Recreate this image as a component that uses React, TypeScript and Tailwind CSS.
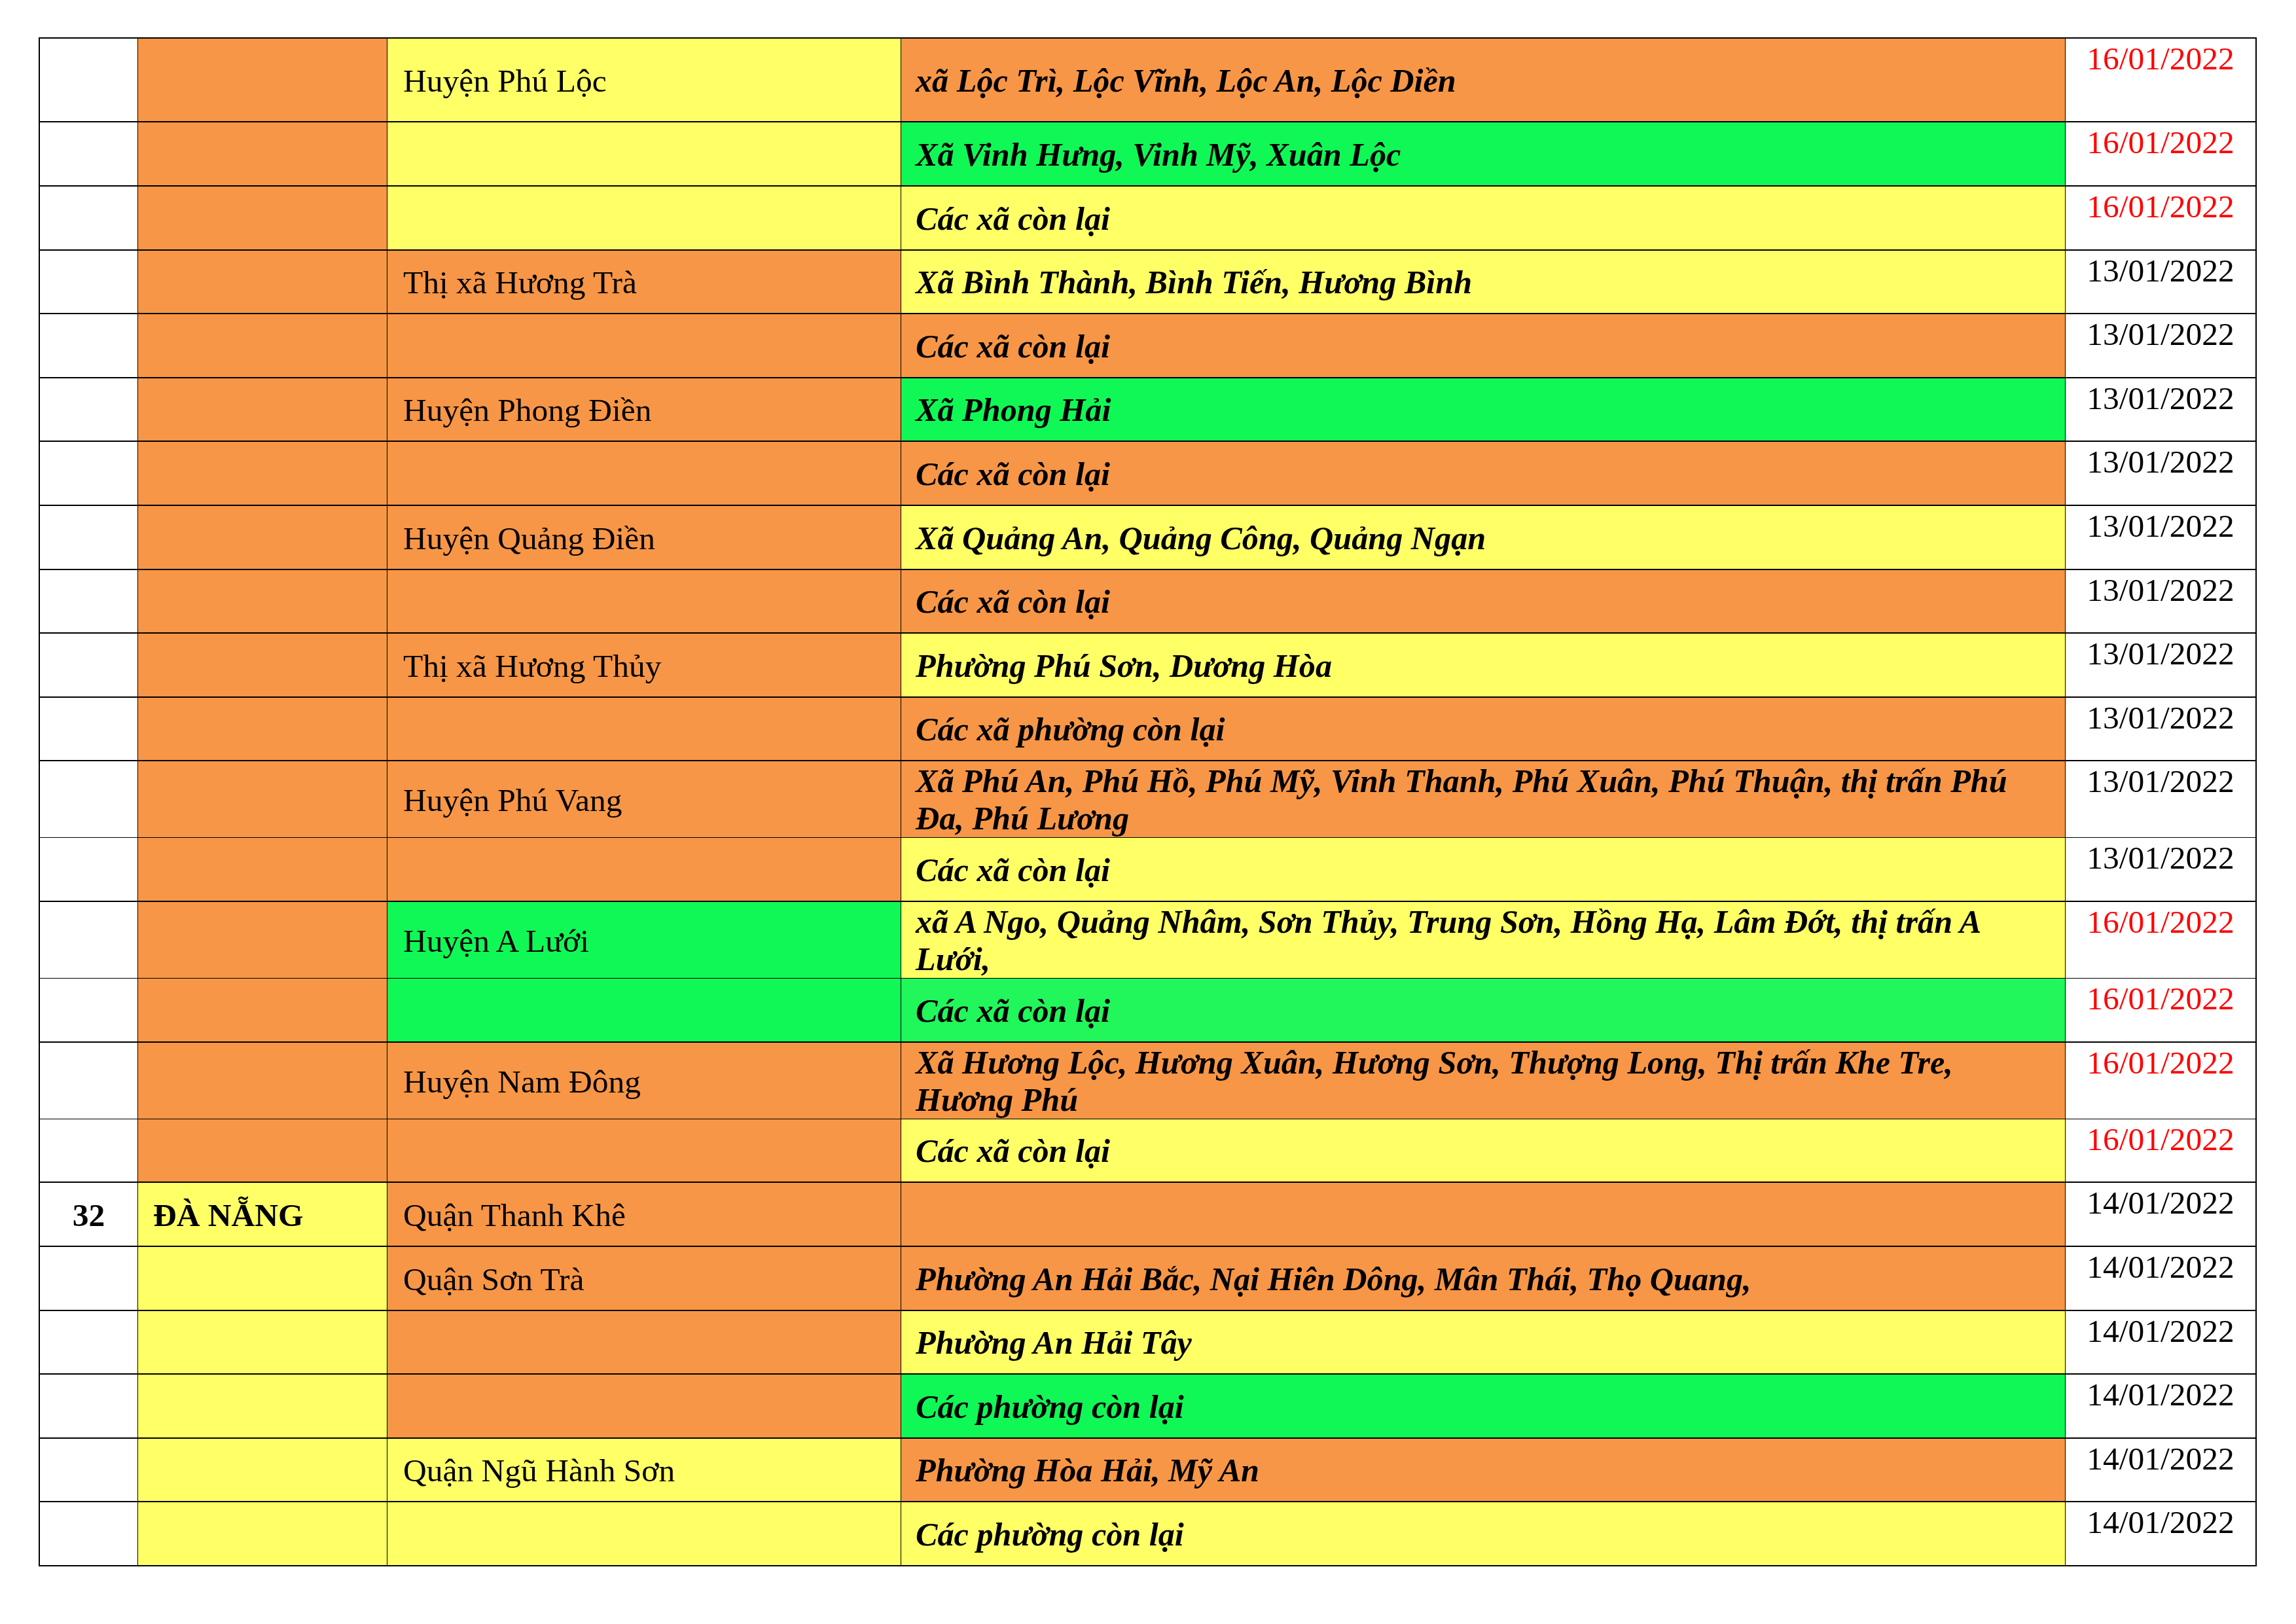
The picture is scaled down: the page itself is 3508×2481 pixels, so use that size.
import React from "react";

type Row = {
  h: string;
  no?: string;
  c2: string;
  prov?: string;
  c3: string;
  district?: string;
  c4: string;
  wards?: string[];
  date: string;
  red: boolean;
};

const BG: Record<string, string> = {
  o: "bg-[#f79646]",
  y: "bg-[#ffff66]",
  g: "bg-[#10f855]",
  g2: "bg-[#21f65a]",
  w: "bg-white",
};

const D16 = "16/01/2022";
const D13 = "13/01/2022";
const D14 = "14/01/2022";

const rows: Row[] = [
  { h: "h-[126px]", c2: "o", c3: "y", district: "Huyện Phú Lộc", c4: "o", wards: ["xã Lộc Trì, Lộc Vĩnh, Lộc An, Lộc Diền"], date: D16, red: true },
  { h: "h-[96px]", c2: "o", c3: "y", c4: "g", wards: ["Xã Vinh Hưng, Vinh Mỹ, Xuân Lộc"], date: D16, red: true },
  { h: "h-[96px]", c2: "o", c3: "y", c4: "y", wards: ["Các xã còn lại"], date: D16, red: true },
  { h: "h-[95px]", c2: "o", c3: "o", district: "Thị xã Hương Trà", c4: "y", wards: ["Xã Bình Thành, Bình Tiến, Hương Bình"], date: D13, red: false },
  { h: "h-[96px]", c2: "o", c3: "o", c4: "o", wards: ["Các xã còn lại"], date: D13, red: false },
  { h: "h-[95px]", c2: "o", c3: "o", district: "Huyện Phong Điền", c4: "g", wards: ["Xã Phong Hải"], date: D13, red: false },
  { h: "h-[96px]", c2: "o", c3: "o", c4: "o", wards: ["Các xã còn lại"], date: D13, red: false },
  { h: "h-[96px]", c2: "o", c3: "o", district: "Huyện Quảng Điền", c4: "y", wards: ["Xã Quảng An, Quảng Công, Quảng Ngạn"], date: D13, red: false },
  { h: "h-[95px]", c2: "o", c3: "o", c4: "o", wards: ["Các xã còn lại"], date: D13, red: false },
  { h: "h-[96px]", c2: "o", c3: "o", district: "Thị xã Hương Thủy", c4: "y", wards: ["Phường Phú Sơn, Dương Hòa"], date: D13, red: false },
  { h: "h-[95px]", c2: "o", c3: "o", c4: "o", wards: ["Các xã phường còn lại"], date: D13, red: false },
  { h: "h-[115px]", c2: "o", c3: "o", district: "Huyện Phú Vang", c4: "o", wards: ["Xã Phú An, Phú Hồ, Phú Mỹ, Vinh Thanh, Phú Xuân, Phú Thuận, thị trấn Phú", "Đa, Phú Lương"], date: D13, red: false },
  { h: "h-[96px]", c2: "o", c3: "o", c4: "y", wards: ["Các xã còn lại"], date: D13, red: false },
  { h: "h-[115px]", c2: "o", c3: "g", district: "Huyện A Lưới", c4: "y", wards: ["xã A Ngo, Quảng Nhâm, Sơn Thủy, Trung Sơn, Hồng Hạ, Lâm Đớt, thị trấn A", "Lưới,"], date: D16, red: true },
  { h: "h-[96px]", c2: "o", c3: "g", c4: "g2", wards: ["Các xã còn lại"], date: D16, red: true },
  { h: "h-[115px]", c2: "o", c3: "o", district: "Huyện Nam Đông", c4: "o", wards: ["Xã Hương Lộc, Hương Xuân, Hương Sơn, Thượng Long, Thị trấn Khe Tre,", "Hương Phú"], date: D16, red: true },
  { h: "h-[95px]", c2: "o", c3: "o", c4: "y", wards: ["Các xã còn lại"], date: D16, red: true },
  { h: "h-[96px]", no: "32", c2: "y", prov: "ĐÀ NẴNG", c3: "o", district: "Quận Thanh Khê", c4: "o", date: D14, red: false },
  { h: "h-[96px]", c2: "y", c3: "o", district: "Quận Sơn Trà", c4: "o", wards: ["Phường An Hải Bắc, Nại Hiên Dông, Mân Thái, Thọ Quang,"], date: D14, red: false },
  { h: "h-[95px]", c2: "y", c3: "o", c4: "y", wards: ["Phường An Hải Tây"], date: D14, red: false },
  { h: "h-[96px]", c2: "y", c3: "o", c4: "g", wards: ["Các phường còn lại"], date: D14, red: false },
  { h: "h-[95px]", c2: "y", c3: "y", district: "Quận Ngũ Hành Sơn", c4: "o", wards: ["Phường Hòa Hải, Mỹ An"], date: D14, red: false },
  { h: "h-[96px]", c2: "y", c3: "y", c4: "y", wards: ["Các phường còn lại"], date: D14, red: false },
];

export default function App() {
  return (
    <div className="w-[3508px] h-[2481px] bg-white pt-[57px] pl-[59px] font-['Liberation_Serif','Times_New_Roman',serif] text-[49.5px] leading-[57px] text-black">
      <div className="flex w-[3389px] flex-col gap-[2px] bg-black p-[2px]">
        {rows.map((r, i) => (
          <div key={i} className={`grid grid-cols-[149px_380px_784px_1778px_290px] gap-x-[1px] ${r.h}`}>
            <div className="flex items-center justify-center bg-white pt-[2px] font-bold">{r.no ?? ""}</div>
            <div className={`flex items-center pl-[23px] pt-[2px] font-bold ${BG[r.c2]}`}>{r.prov ?? ""}</div>
            <div className={`flex items-center pl-[24px] pt-[2px] ${BG[r.c3]}`}>{r.district ?? ""}</div>
            <div className={`flex flex-col justify-center pl-[22px] pt-[2px] text-[50.2px] font-bold italic ${BG[r.c4]}`}>
              {(r.wards ?? []).map((w, j) => (
                <div key={j} className="whitespace-nowrap">{w}</div>
              ))}
            </div>
            <div className={`bg-white pt-[2px] text-center ${r.red ? "text-[#ff0000]" : "text-black"}`}>{r.date}</div>
          </div>
        ))}
      </div>
    </div>
  );
}
